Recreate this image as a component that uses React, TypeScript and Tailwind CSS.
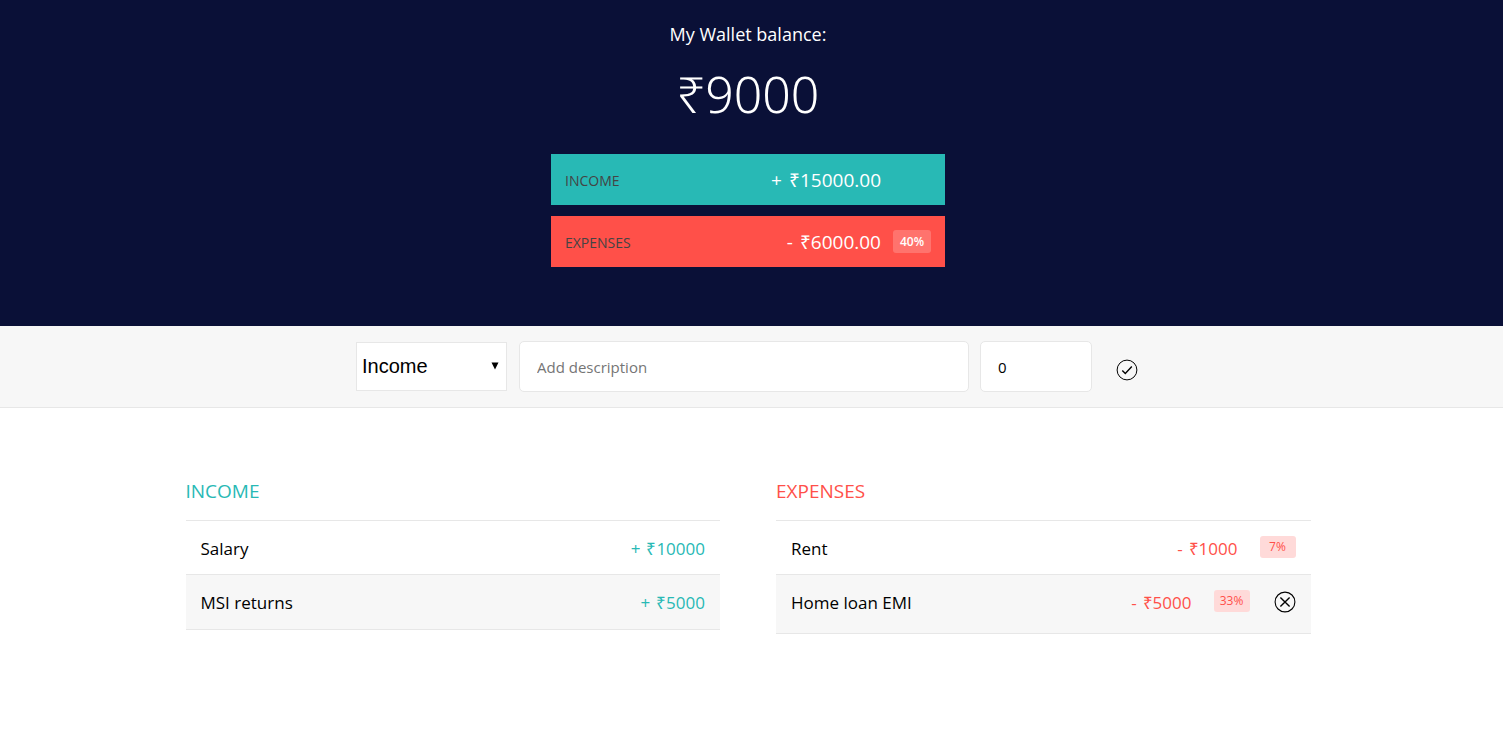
import { useState } from "react";
import type { FormEvent } from "react";

type Entry = { id: number; label: string; amount: number; percent?: number; active?: boolean };

const incomes: Entry[] = [
  { id: 1, label: "Salary", amount: 10000 },
  { id: 2, label: "MSI returns", amount: 5000 },
];

const expenses: Entry[] = [
  { id: 1, label: "Rent", amount: 1000, percent: 7 },
  { id: 2, label: "Home loan EMI", amount: 5000, percent: 33, active: true },
];

function CheckIcon() {
  return (
    <svg viewBox="0 0 22 22" className="block size-[22px]" fill="none" stroke="currentColor" aria-hidden="true">
      <circle cx="11" cy="11" r="9.9" strokeWidth="1" />
      <path d="M6.3 11.4 9.3 14.4 15.8 7.5" strokeWidth="1.4" />
    </svg>
  );
}

function CloseIcon() {
  return (
    <svg viewBox="0 0 22 22" className="block size-[22px]" fill="none" stroke="currentColor" aria-hidden="true">
      <circle cx="11" cy="11" r="9.9" strokeWidth="1.1" />
      <path d="M6.4 6.4 15.6 15.6M15.6 6.4 6.4 15.6" strokeWidth="1.4" />
    </svg>
  );
}

function IncomeList() {
  return (
    <section className="flex-1">
      <h2 className="mb-[17px] text-[19px] leading-6 text-[#28b9b5]">INCOME</h2>
      <ul className="border-t border-[#e7e7e7]">
        {incomes.map((item) => (
          <li
            key={item.id}
            className="flex items-center justify-between border-b border-[#e7e7e7] px-[15px] pt-[15px] pb-[13px] text-[17px] leading-[25px] even:bg-[#f7f7f7] even:pb-[14px]"
          >
            <span>{item.label}</span>
            <span className="flex gap-[6px] text-[#28b9b5]">
              <span>+</span>
              <span>₹{item.amount}</span>
            </span>
          </li>
        ))}
      </ul>
    </section>
  );
}

function ExpenseList() {
  return (
    <section className="flex-1">
      <h2 className="mb-[17px] text-[19px] leading-6 text-[#ff5049]">EXPENSES</h2>
      <ul className="border-t border-[#e7e7e7]">
        {expenses.map((item) => (
          <li
            key={item.id}
            className="flex items-start border-b border-[#e7e7e7] px-[15px] pt-[15px] pb-[13px] text-[17px] leading-[25px] even:bg-[#f7f7f7] even:pb-[18px]"
          >
            <span className="flex-1">{item.label}</span>
            <span className="flex gap-[6px] text-[#ff5049]">
              <span>-</span>
              <span>₹{item.amount}</span>
            </span>
            <span className="ml-[22px] w-9 rounded-[3px] bg-[#ffdad9] text-center text-xs leading-[22px] text-[#ff5049]">
              {item.percent}%
            </span>
            {item.active && (
              <button type="button" aria-label="Delete item" className="mt-px ml-6">
                <CloseIcon />
              </button>
            )}
          </li>
        ))}
      </ul>
    </section>
  );
}

export default function App() {
  const [kind, setKind] = useState("income");
  const [description, setDescription] = useState("");
  const [value, setValue] = useState("0");
  const onSubmit = (event: FormEvent) => event.preventDefault();

  return (
    <div className="min-h-screen bg-white font-['Open_Sans',sans-serif] text-black">
      <header className="bg-[#0a1037] pt-5 pr-[7px] pb-[59px] text-white">
        <h1 className="text-center text-lg leading-7">My Wallet balance:</h1>
        <p className="mt-3 text-center font-['Noto_Sans',sans-serif] text-[50px] leading-[68px] font-light">₹9000</p>
        <div className="mx-auto mt-[26px] flex w-[394px] max-w-full flex-col gap-[11px]">
          <div className="flex h-[51px] items-center bg-[#28b9b5] pt-[2px] pr-16 pl-[14px]">
            <span className="flex-1 text-sm text-[#444]">INCOME</span>
            <span className="flex gap-[7px] text-[19px]">
              <span>+</span>
              <span>₹15000.00</span>
            </span>
          </div>
          <div className="flex h-[51px] items-center bg-[#ff5049] px-[14px] pt-[2px]">
            <span className="flex-1 text-sm text-[#444]">EXPENSES</span>
            <span className="flex gap-[7px] text-[19px]">
              <span>-</span>
              <span>₹6000.00</span>
            </span>
            <span className="mb-[2px] ml-3 w-[38px] rounded-[3px] bg-white/20 text-center text-xs leading-[23px] font-semibold">
              40%
            </span>
          </div>
        </div>
      </header>

      <form
        onSubmit={onSubmit}
        className="flex items-center justify-center border-b border-[#e7e7e7] bg-[#f7f7f7] py-[15px] pr-[9px]"
      >
        <div className="relative">
          <select
            aria-label="Entry type"
            value={kind}
            onChange={(event) => setKind(event.target.value)}
            className="block h-[49px] w-[151px] appearance-none border border-[#e7e7e7] bg-white pb-[2px] pl-[5px] font-['Liberation_Sans',Arial,sans-serif] text-xl"
          >
            <option value="income">Income</option>
            <option value="expense">Expense</option>
          </select>
          <svg
            viewBox="0 0 8 8"
            className="pointer-events-none absolute top-5 right-2 size-2"
            fill="currentColor"
            aria-hidden="true"
          >
            <path d="M0.5 0.5H7.5L4 7.5Z" />
          </svg>
        </div>
        <input
          type="text"
          aria-label="Description"
          placeholder="Add description"
          value={description}
          onChange={(event) => setDescription(event.target.value)}
          className="ml-3 h-[51px] w-[450px] min-w-0 rounded-[5px] border border-[#e7e7e7] bg-white px-[17px] text-[15px] placeholder:text-[#757575]"
        />
        <input
          type="text"
          inputMode="numeric"
          aria-label="Amount"
          value={value}
          onChange={(event) => setValue(event.target.value)}
          className="ml-[11px] h-[51px] w-28 rounded-[5px] border border-[#e7e7e7] bg-white px-[17px] text-[15px]"
        />
        <button type="submit" aria-label="Add entry" className="ml-6 pt-[6px]">
          <CheckIcon />
        </button>
      </form>

      <main className="pt-[71px] pr-[7px]">
        <div className="mx-auto flex w-full max-w-[1125px] gap-14">
          <IncomeList />
          <ExpenseList />
        </div>
      </main>
    </div>
  );
}
